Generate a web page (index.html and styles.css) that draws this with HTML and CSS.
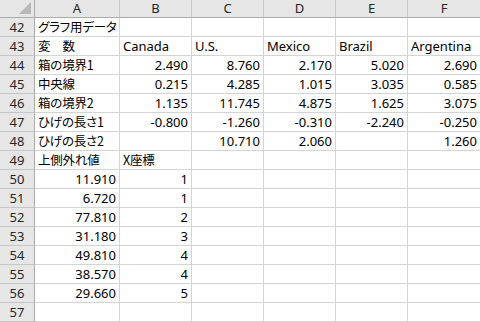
FILE: index.html
```html
<!DOCTYPE html>
<html lang="ja">
<head>
<meta charset="utf-8">
<title>グラフ用データ</title>
<link rel="stylesheet" href="styles.css">
</head>
<body>
<div class="sheet">
  <div class="corner"><span class="tri"></span></div>
  <div class="ch">A</div><div class="ch">B</div><div class="ch">C</div><div class="ch">D</div><div class="ch">E</div><div class="ch last">F</div>

  <div class="rh">42</div><div class="c jp">グラフ用データ</div><div class="c"></div><div class="c"></div><div class="c"></div><div class="c"></div><div class="c"></div>
  <div class="rh">43</div><div class="c jp">変　数</div><div class="c">Canada</div><div class="c">U.S.</div><div class="c">Mexico</div><div class="c">Brazil</div><div class="c">Argentina</div>
  <div class="rh">44</div><div class="c jp">箱の境界1</div><div class="c n">2.490</div><div class="c n">8.760</div><div class="c n">2.170</div><div class="c n">5.020</div><div class="c n">2.690</div>
  <div class="rh">45</div><div class="c jp">中央線</div><div class="c n">0.215</div><div class="c n">4.285</div><div class="c n">1.015</div><div class="c n">3.035</div><div class="c n">0.585</div>
  <div class="rh">46</div><div class="c jp">箱の境界2</div><div class="c n">1.135</div><div class="c n">11.745</div><div class="c n">4.875</div><div class="c n">1.625</div><div class="c n">3.075</div>
  <div class="rh">47</div><div class="c jp">ひげの長さ1</div><div class="c n">-0.800</div><div class="c n">-1.260</div><div class="c n">-0.310</div><div class="c n">-2.240</div><div class="c n">-0.250</div>
  <div class="rh">48</div><div class="c jp">ひげの長さ2</div><div class="c n"></div><div class="c n">10.710</div><div class="c n">2.060</div><div class="c n"></div><div class="c n">1.260</div>
  <div class="rh">49</div><div class="c jp">上側外れ値</div><div class="c jp">X座標</div><div class="c"></div><div class="c"></div><div class="c"></div><div class="c"></div>
  <div class="rh">50</div><div class="c n">11.910</div><div class="c n">1</div><div class="c"></div><div class="c"></div><div class="c"></div><div class="c"></div>
  <div class="rh">51</div><div class="c n">6.720</div><div class="c n">1</div><div class="c"></div><div class="c"></div><div class="c"></div><div class="c"></div>
  <div class="rh">52</div><div class="c n">77.810</div><div class="c n">2</div><div class="c"></div><div class="c"></div><div class="c"></div><div class="c"></div>
  <div class="rh">53</div><div class="c n">31.180</div><div class="c n">3</div><div class="c"></div><div class="c"></div><div class="c"></div><div class="c"></div>
  <div class="rh">54</div><div class="c n">49.810</div><div class="c n">4</div><div class="c"></div><div class="c"></div><div class="c"></div><div class="c"></div>
  <div class="rh">55</div><div class="c n">38.570</div><div class="c n">4</div><div class="c"></div><div class="c"></div><div class="c"></div><div class="c"></div>
  <div class="rh">56</div><div class="c n">29.660</div><div class="c n">5</div><div class="c"></div><div class="c"></div><div class="c"></div><div class="c"></div>
  <div class="rh">57</div><div class="c"></div><div class="c"></div><div class="c"></div><div class="c"></div><div class="c"></div><div class="c"></div>
</div>
</body>
</html>
```
FILE: styles.css
```css
html, body {
  margin: 0;
  padding: 0;
  background: #ffffff;
  overflow: hidden;
}
.sheet {
  display: grid;
  grid-template-columns: 35px 85px 72px 72px 72px 72px 72px;
  grid-template-rows: 18px repeat(16, 19px);
  width: 480px;
  height: 322px;
  font-family: "Noto Sans", "Noto Sans CJK JP", sans-serif;
  font-size: 13px;
  color: #000;
}
.sheet > div {
  box-sizing: border-box;
  white-space: nowrap;
  overflow: hidden;
}
.corner {
  position: relative;
  background: #e6e6e6;
  border-right: 1px solid #ababab;
  border-bottom: 1px solid #ababab;
}
.tri {
  position: absolute;
  right: 3px;
  bottom: 3px;
  width: 0;
  height: 0;
  border-left: 12px solid transparent;
  border-bottom: 12px solid #b8b8b8;
}
.ch {
  background: #e6e6e6;
  border-right: 1px solid #c6c6c6;
  border-bottom: 1px solid #ababab;
  display: flex;
  align-items: center;
  justify-content: center;
  color: #262626;
  line-height: 1;
}
.ch.last {
  border-right: none;
}
.rh {
  background: #e6e6e6;
  border-right: 1px solid #ababab;
  border-bottom: 1px solid #c6c6c6;
  display: flex;
  align-items: center;
  justify-content: center;
  color: #262626;
  line-height: 1;
}
.c {
  border-right: 1px solid #d4d4d4;
  border-bottom: 1px solid #d4d4d4;
  display: flex;
  align-items: center;
  padding: 0 3px;
  line-height: 1;
}
.c:nth-child(7n) {
  border-right: none;
}
.jp {
  font-family: "Noto Sans CJK JP", "Noto Sans", sans-serif;
  font-size: 12.5px;
  font-feature-settings: "palt";
  letter-spacing: -0.2px;
}
.n {
  justify-content: flex-end;
}
```
